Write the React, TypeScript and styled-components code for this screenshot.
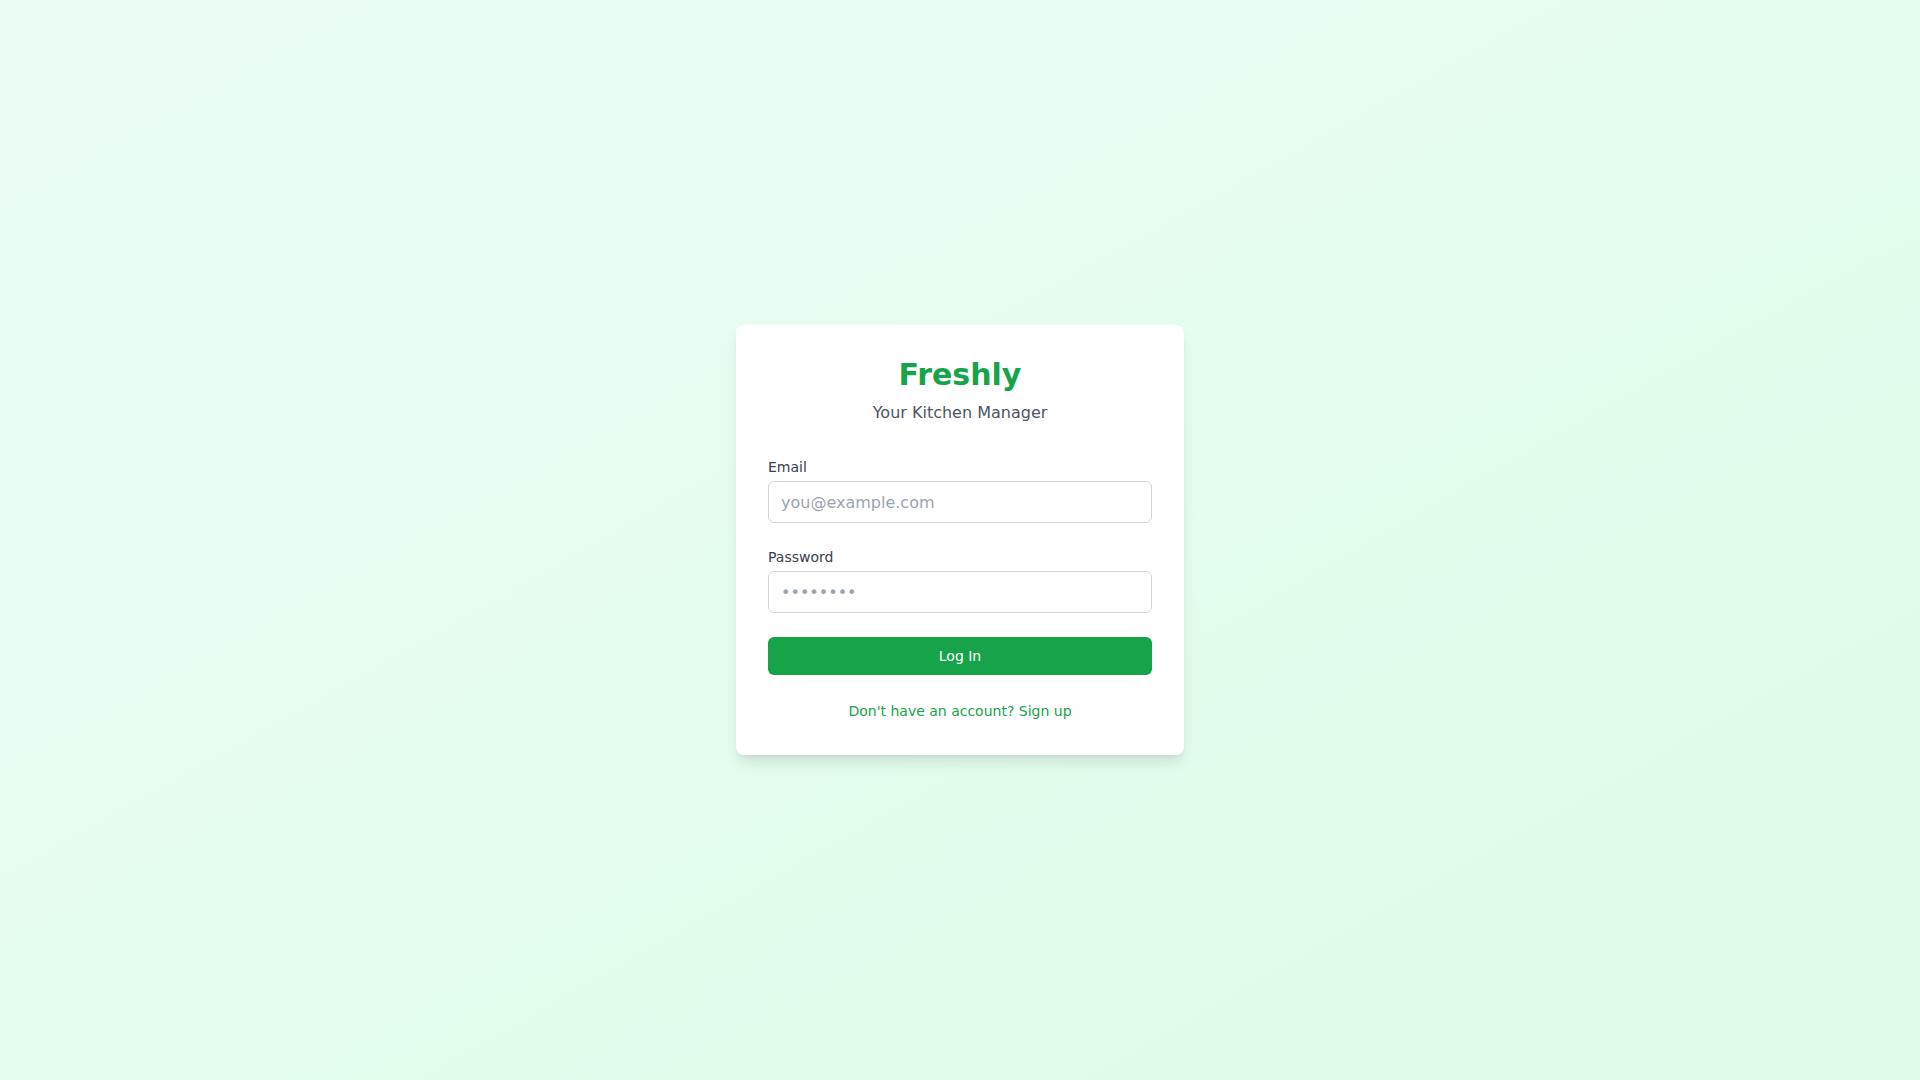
import React from "react"
import styled, { createGlobalStyle } from "styled-components"

const GlobalStyle = createGlobalStyle`
    * { box-sizing: border-box; }
    body {
        margin: 0;
        font-family: "DejaVu Sans", sans-serif;
    }
`;

const Page = styled.div`
    min-height: 100vh;
    display: flex;
    align-items: center;
    justify-content: center;
    background: linear-gradient(to bottom right, #ecfdf5, #dcfce7);
`;

const Card = styled.div`
    width: 448px;
    background: #ffffff;
    border-radius: 8px;
    padding: 32px;
    box-shadow: 0 10px 15px -3px rgba(0, 0, 0, 0.1), 0 4px 6px -4px rgba(0, 0, 0, 0.1);
`;

const Header = styled.div`
    text-align: center;
    margin-bottom: 32px;
`;

const Title = styled.h1`
    margin: 0;
    font-size: 30px;
    line-height: 36px;
    font-weight: bold;
    color: #16a34a;
`;

const Subtitle = styled.p`
    margin: 8px 0 0;
    font-size: 16px;
    line-height: 24px;
    color: #4b5563;
`;

const Form = styled.form`
    display: flex;
    flex-direction: column;
    gap: 24px;
`;

const Field = styled.div`
    display: flex;
    flex-direction: column;
`;

const Label = styled.label`
    font-size: 14px;
    line-height: 20px;
    color: #374151;
    margin-bottom: 4px;
`;

const Input = styled.input`
    width: 100%;
    height: 42px;
    padding: 8px 12px;
    border: 1px solid #d1d5db;
    border-radius: 6px;
    font-family: inherit;
    font-size: 16px;
    line-height: 24px;
    color: #111827;
    outline: none;

    &::placeholder {
        color: #9ca3af;
    }
`;

const Button = styled.button`
    width: 100%;
    height: 38px;
    border: none;
    border-radius: 6px;
    background: #16a34a;
    color: #ffffff;
    font-family: inherit;
    font-size: 14px;
    line-height: 20px;
    cursor: pointer;
`;

const Footer = styled.p`
    margin: 24px 0 0;
    text-align: center;
    font-size: 14px;
    line-height: 24px;
`;

const Link = styled.a`
    color: #16a34a;
    text-decoration: none;
`;

const App: React.FC = () => {
    return (
        <>
            <GlobalStyle />
            <Page>
                <Card>
                    <Header>
                        <Title>Freshly</Title>
                        <Subtitle>Your Kitchen Manager</Subtitle>
                    </Header>
                    <Form onSubmit={(e) => e.preventDefault()}>
                        <Field>
                            <Label htmlFor="email">Email</Label>
                            <Input id="email" type="email" placeholder="you@example.com" />
                        </Field>
                        <Field>
                            <Label htmlFor="password">Password</Label>
                            <Input id="password" type="password" placeholder="••••••••" />
                        </Field>
                        <Button type="submit">Log In</Button>
                    </Form>
                    <Footer>
                        <Link href="#">Don't have an account? Sign up</Link>
                    </Footer>
                </Card>
            </Page>
        </>
    )
}

export default App;
